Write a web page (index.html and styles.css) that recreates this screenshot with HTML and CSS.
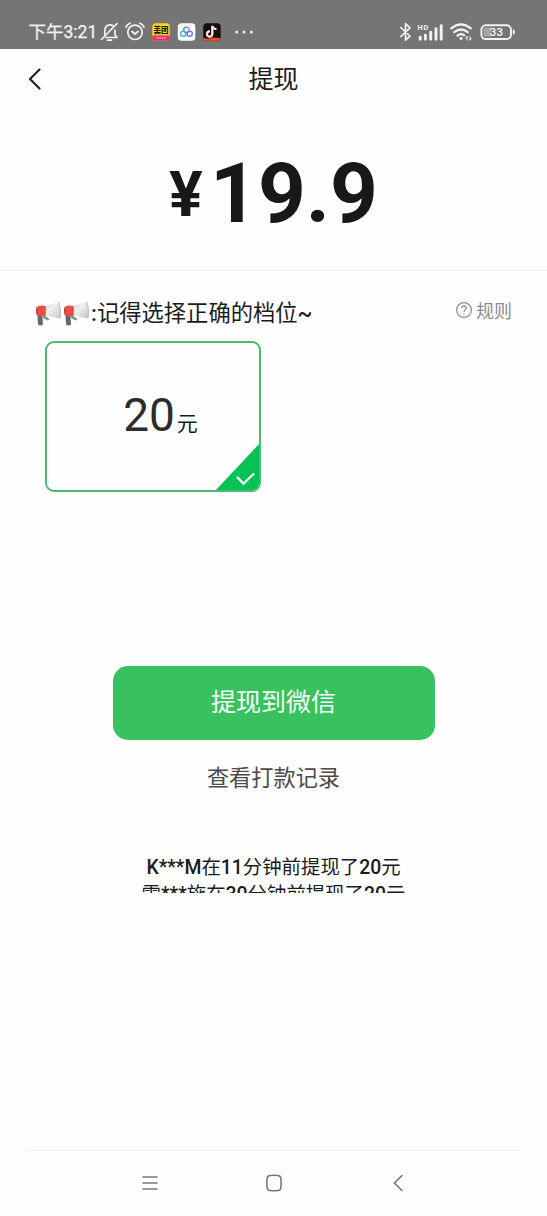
FILE: index.html
```html
<!DOCTYPE html>
<html lang="zh-CN">
<head>
<meta charset="utf-8">
<title>提现</title>
<link rel="stylesheet" href="styles.css">
</head>
<body>
<header class="status">
  <span class="clock">下午3:21</span>
  <svg class="status-left" width="160" height="24" viewBox="98 20 160 24" fill="none">
    <g stroke="#f2f2f2" stroke-width="1.7" stroke-linecap="round" stroke-linejoin="round">
      <path d="M101.500 39.500L117 23.500M104.800 34.500V31Q105 24.800 110 24.800Q112 24.800 113.300 26M115 30V35L117 37.500H106M107.500 40.200H111.500"/>
      <circle cx="135" cy="32.300" r="7.200"/>
      <path d="M126 27Q127.500 24 130 23.200M140 23.200Q142.500 24 144 27M132 31.500L135 34L138 31.500"/>
    </g>
    <rect x="152.300" y="23.300" width="17.500" height="17.500" rx="3.500" fill="#ffd51e"/>
    <path d="M152.300 35.500H169.800V37.300A3.500 3.500 0 0 1 166.300 40.800H155.800A3.500 3.500 0 0 1 152.300 37.300Z" fill="#ed2878"/>
    <text class="tile-name" x="161" y="33.300" text-anchor="middle">美团</text>
    <path d="M156 38H166" stroke="#f9a7c6" stroke-width="1.300" stroke-dasharray="1.500 .5"/>
    <rect x="177.800" y="23.300" width="17.500" height="17.500" rx="3.500" fill="#fff"/>
    <circle cx="186.500" cy="30" r="2.800" stroke="#ef6a86" stroke-width="1.300"/>
    <circle cx="183.300" cy="33.700" r="2.600" stroke="#35aee8" stroke-width="1.400"/>
    <circle cx="189.700" cy="33.700" r="2.600" stroke="#3f8bea" stroke-width="1.400"/>
    <path d="M183.700 30A2.800 2.800 0 0 1 186.500 27.200" stroke="#38a8e7" stroke-width="1.300"/>
    <rect x="203.200" y="23.300" width="17.500" height="17.500" rx="3.500" fill="#170d13"/>
    <path d="M203.200 37.500L208 39L212 37.500L220.700 38A3.500 3.500 0 0 1 217.200 40.800H206.700A3.500 3.500 0 0 1 203.200 37.500Z" fill="#f0521f"/>
    <path d="M212.600 26V34A2.700 2.700 0 1 1 210 31.300" stroke="#ff4264" stroke-width="2.200"/>
    <path d="M212.200 25.800V34A2.700 2.700 0 1 1 209.700 31.300M212.200 26Q213 29 216.500 29.300" stroke="#fff" stroke-width="1.900"/>
    <g fill="#eee"><circle cx="236.700" cy="32" r="1.500"/><circle cx="244" cy="32" r="1.500"/><circle cx="251.400" cy="32" r="1.500"/></g>
  </svg>
  <svg class="status-right" width="120" height="24" viewBox="398 20 120 24" fill="none">
    <path d="M400.800 27.500L410 36L405.500 40V23.500L410 27.800L400.800 36.500" stroke="#f2f2f2" stroke-width="1.700" stroke-linejoin="round" stroke-linecap="round"/>
    <text class="hd" x="417.500" y="29.800">HD</text>
    <path d="M420.200 37.300V39.300M425.400 35.300V39.300M430.700 32.300V39.300M436 28.700V39.300M441.200 25.700V39.300" stroke="#f2f2f2" stroke-width="2.900" stroke-linecap="round"/>
    <g stroke="#f2f2f2" stroke-width="2.200" stroke-linecap="round">
      <path d="M451.300 28.400Q461 20.500 470.800 28.400M454.300 32.200Q461 26.800 467.700 32.200M457.500 35.700Q461 32.800 464 35.200"/>
      <path d="M461 38.500H461.100" stroke-width="3"/>
      <path d="M467 36.500V40M465.800 38L467 36.500M470 40V36.500M471.200 38.500L470 40" stroke-width="1"/>
    </g>
    <rect x="481.400" y="25.300" width="29.600" height="13.700" rx="4.300" stroke="#f2f2f2" stroke-width="1.900"/>
    <path d="M485 27.500H491V36.800H485Q483.400 36.800 483.400 35V29Q483.400 27.500 485 27.500Z" fill="#a5a5a5"/>
    <path d="M513.700 30.500V33.500" stroke="#f2f2f2" stroke-width="1.800" stroke-linecap="round"/>
    <text class="charge" x="496.400" y="36.300" text-anchor="middle">33</text>
  </svg>
</header>

<nav class="title-bar">
  <svg class="back" width="16" height="26" viewBox="0 0 16 26" fill="none" stroke="#222" stroke-width="2.200" stroke-linecap="round" stroke-linejoin="round"><path d="M13.500 3.500L4 13L13.500 22.500"/></svg>
  <h1 class="title">提现</h1>
</nav>

<section class="balance">
  <span class="currency">¥</span><span class="amount">19.9</span>
</section>

<main class="main">
  <div class="hint-row">
    <svg class="horns" width="56" height="28" viewBox="0 0 56 28">
      <defs>
        <linearGradient id="bell" x1="0" y1="0" x2="1" y2="1"><stop offset="0" stop-color="#cfd0d2"/><stop offset=".4" stop-color="#f0f0f1"/><stop offset="1" stop-color="#c2c4c7"/></linearGradient>
        <g id="horn">
          <path d="M2.500 15H7.300L8 24.500Q5.500 26.500 3 24.500Z" fill="#62666b"/>
          <path d="M9 15L14.500 19L13 20.500L7.500 18Z" fill="#8c8e90"/>
          <path d="M10 6.300L23.500 2Q25.700 9.500 25 18.500L10 15.500Z" fill="url(#bell)"/>
          <path d="M23.500 2Q26.500 9 25 18.500" fill="none" stroke="#bfc1c4" stroke-width="1.200"/>
          <path d="M1.500 7Q6 4.500 10.800 6.200V15.600Q5.500 17 1.500 15Q.3 11 1.500 7Z" fill="#e75047"/>
          <path d="M1.500 7Q3.500 10 2 15Q.3 11 1.500 7Z" fill="#b94141"/>
        </g>
      </defs>
      <use href="#horn"/><use href="#horn" x="28"/>
    </svg>
    <p class="hint"><b class="latin">:</b>记得选择正确的档位<b class="latin">~</b></p>
    <a class="rules">
      <svg class="rules-icon" width="18" height="18" viewBox="0 0 18 18" fill="none" stroke="#8c8c8c" stroke-width="1.200" stroke-linecap="round"><circle cx="9" cy="9" r="7.400"/><path d="M6.700 7Q6.900 4.800 9 4.800Q11.300 4.900 11.300 6.900Q11.300 8 10 8.900Q9 9.600 9 10.800M9 13V13.200"/></svg>
      <span>规则</span>
    </a>
  </div>

  <div class="option">
    <span class="option-value">20</span><span class="option-unit">元</span>
    <svg class="option-check" width="45" height="48" viewBox="0 0 45 48"><path d="M45 0V48H0Z" fill="#07c157"/><path d="M22.500 34.500L28.500 40.500L38.500 31" fill="none" stroke="#eefff3" stroke-width="2.400" stroke-linecap="round"/></svg>
  </div>

  <button class="withdraw">提现到微信</button>
  <a class="history">查看打款记录</a>

  <div class="ticker">
    <p class="ticker-line"><b class="latin">K***M</b>在<b class="latin">11</b>分钟前提现了<b class="latin">20</b>元</p>
    <p class="ticker-line">雪<b class="latin">***</b>施在<b class="latin">30</b>分钟前提现了<b class="latin">20</b>元</p>
  </div>
</main>

<footer class="system-nav">
  <svg width="18" height="18" viewBox="0 0 18 18" stroke="#777" stroke-width="1.600" stroke-linecap="round"><path d="M2 3H16M2 9H16M2 15H16"/></svg>
  <svg class="home" width="18" height="18" viewBox="0 0 18 18" fill="none" stroke="#777" stroke-width="1.600"><path d="M5 1.500Q9 1 13 1.500Q15.600 1.700 15.900 4.500Q16.300 9 15.900 13.500Q15.600 16.300 13 16.500Q9 17 5 16.500Q2.400 16.300 2.100 13.500Q1.700 9 2.100 4.500Q2.400 1.700 5 1.500Z"/></svg>
  <svg width="18" height="18" viewBox="0 0 18 18" fill="none" stroke="#777" stroke-width="1.600" stroke-linecap="round"><path d="M12 1.500L4.500 9L12 16.500"/></svg>
</footer>
</body>
</html>
```

FILE: styles.css
```css
* { box-sizing: border-box; }

body {
  margin: 0;
  width: 547px;
  height: 1216px;
  display: flex;
  flex-direction: column;
  overflow: hidden;
  background: #fefefe;
  color: #1b1b1b;
  font-family: Roboto, "Noto Sans CJK SC", sans-serif;
}

h1, p { margin: 0; font-weight: 400; }
svg { display: block; flex: none; }

.status {
  height: 48.500px;
  padding: 20px 29px 0 28.500px;
  display: flex;
  align-items: flex-start;
  background: #757575;
  color: #f2f2f2;
}
.clock { width: 69.500px; font-size: 17.500px; line-height: 24px; white-space: nowrap; -webkit-text-stroke: .25px #f2f2f2; }
.status-right { margin-left: auto; }
.tile-name { font: 900 7.500px "Noto Sans CJK SC", sans-serif; fill: #241c08; }
.hd { font: 700 7.500px Roboto, sans-serif; fill: #f2f2f2; letter-spacing: .7px; }
.charge { font: 500 11.500px Roboto, sans-serif; fill: #f5f5f5; }

.title-bar {
  height: 61px;
  padding: 0 26px;
  display: grid;
  grid-template-columns: 16px 1fr 16px;
  align-items: center;
}
.title { padding-top: 2px; text-align: center; font-size: 25px; line-height: 36px; }

.balance {
  height: 161px;
  padding: 34px 0 0;
  display: flex;
  justify-content: center;
  align-items: flex-start;
  gap: 7px;
  border-bottom: 1.500px solid #f3f3f3;
  color: #181818;
  font-weight: 700;
}
.currency { width: 34px; font-size: 63px; line-height: 101px; }
.amount { font-size: 83.500px; line-height: 99px; }

.main { flex: 1; padding: 25px 35px 0; display: flex; flex-direction: column; }
.hint-row { display: flex; height: 45px; align-items: flex-start; }
.horns { margin-top: 4px; }
.hint { font-size: 22.300px; line-height: 35px; white-space: nowrap; }
.latin { font-weight: 500; }
.rules { margin: 1px 0 0 auto; display: flex; gap: 3px; align-items: center; color: #8c8c8c; font-size: 18px; line-height: 29px; }
.rules-icon { margin-bottom: 3px; }

.option {
  position: relative;
  width: 216px;
  height: 151px;
  margin-left: 10px;
  padding: 0 0 2px 15px;
  display: flex;
  justify-content: center;
  align-items: center;
  gap: 2px;
  border: 2px solid #4dba70;
  border-radius: 9px;
  overflow: hidden;
}
.option-value { font-size: 46px; line-height: 60px; color: #2c2c2c; }
.option-unit { font-size: 21px; line-height: 30px; padding-top: 18px; }
.option-check { position: absolute; right: -1px; bottom: -1px; }

.withdraw {
  width: 322px;
  height: 74px;
  margin: 174px auto 0;
  padding: 1px 0 0;
  border: 0;
  border-radius: 15px;
  background: #3ac15f;
  color: #f4fff6;
  font: 400 25px/36px Roboto, "Noto Sans CJK SC", sans-serif;
}
.history { margin: 21px auto 0; color: #4b4b4b; font-size: 22.200px; line-height: 34px; }

.ticker { height: 40px; margin-top: 58px; padding-top: 1px; overflow: hidden; text-align: center; }
.ticker-line { font-size: 19.400px; line-height: 27px; white-space: nowrap; }

.system-nav {
  height: 66px;
  margin: 0 26px;
  padding: 23px 112.600px 0 115.300px;
  display: flex;
  justify-content: space-between;
  align-items: flex-start;
  border-top: 1.500px solid #f3f3f3;
}
.home { margin-right: 2.700px; }
```
